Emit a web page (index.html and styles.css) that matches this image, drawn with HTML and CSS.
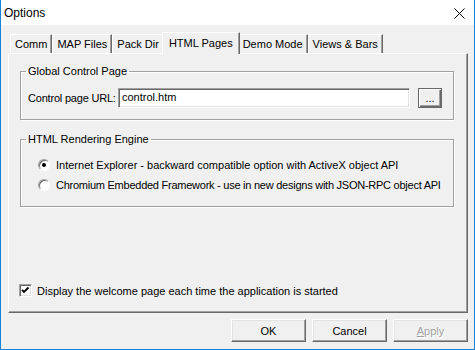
FILE: index.html
```html
<!DOCTYPE html>
<html lang="en">
<head>
    <meta charset="UTF-8">
    <title>Options</title>
    <link rel="stylesheet" href="styles.css">
</head>
<body>
    <div class="window">
        <div class="titlebar">
            <span class="title">Options</span>
            <svg class="close" width="11" height="11" viewBox="0 0 11 11">
                <path d="M0.5 0.5 L10.5 10.5 M10.5 0.5 L0.5 10.5" stroke="#000" stroke-width="1" fill="none"/>
            </svg>
        </div>
        <div class="client">
            <div class="tabs">
                <div class="tab">Comm</div>
                <div class="tab">MAP Files</div>
                <div class="tab">Pack Dir</div>
                <div class="tab active">HTML Pages</div>
                <div class="tab">Demo Mode</div>
                <div class="tab">Views &amp; Bars</div>
            </div>
            <div class="page">
                <fieldset class="group">
                    <legend>Global Control Page</legend>
                    <div class="url-row">
                        <label class="url-label">Control page URL:</label>
                        <div class="edit">control.htm</div>
                        <button class="btn browse">...</button>
                    </div>
                </fieldset>
                <fieldset class="group group-engine">
                    <legend>HTML Rendering Engine</legend>
                    <div class="options">
                        <div class="option"><span class="radio checked"></span>Internet Explorer - backward compatible option with ActiveX object API</div>
                        <div class="option narrow"><span class="radio"></span>Chromium Embedded Framework - use in new designs with JSON-RPC object API</div>
                    </div>
                </fieldset>
                <div class="check-row">
                    <span class="checkbox">
                        <svg width="11" height="11" viewBox="0 0 11 11">
                            <path d="M2 5 L4 7 L8.5 2.5" stroke="#000" stroke-width="1.8" fill="none"/>
                        </svg>
                    </span>
                    Display the welcome page each time the application is started
                </div>
            </div>
            <div class="buttons">
                <button class="btn">OK</button>
                <button class="btn">Cancel</button>
                <button class="btn disabled"><u>A</u>pply</button>
            </div>
        </div>
    </div>
</body>
</html>
```

FILE: styles.css
```css
body {
    margin: 0;
    font-family: "Liberation Sans", Arial, sans-serif;
    font-size: 11px;
    color: #000;
}
.window {
    width: 475px;
    height: 350px;
    box-sizing: border-box;
    border: 1px solid #1883d7;
    border-top: none;
    display: flex;
    flex-direction: column;
    background: #f0f0f0;
}
.titlebar {
    height: 25px;
    background: #fff;
    display: flex;
    align-items: center;
    justify-content: space-between;
    padding: 0 9px 0 3px;
    flex: none;
}
.title {
    font-size: 12px;
    margin-top: 1px;
}
.close {
    margin-top: 1px;
}
.client {
    flex: 1;
    padding: 7px 6px 0 7px;
}
.tabs {
    display: flex;
    align-items: flex-end;
    height: 21px;
    padding-left: 2px;
}
.tab {
    height: 19px;
    line-height: 19px;
    padding: 0 4px;
    border-top: 1px solid #fff;
    border-left: 1px solid #fff;
    border-right: 1px solid #696969;
    box-shadow: inset -1px 0 0 #a0a0a0;
    box-sizing: border-box;
    white-space: nowrap;
}
.tab.active {
    position: relative;
    z-index: 1;
    height: 22px;
    line-height: 20px;
    margin: 0 -2px -1px;
    padding: 0 6px;
    background: #f0f0f0;
}
.page {
    width: 460px;
    height: 260px;
    box-sizing: border-box;
    border-top: 1px solid #fff;
    border-left: 1px solid #fff;
    border-right: 1px solid #696969;
    border-bottom: 1px solid #696969;
    box-shadow: inset -1px -1px 0 #a0a0a0;
    padding: 11px 13px 0 11px;
}
.group {
    margin: 0;
    padding: 0;
    min-width: 0;
    border: 1px solid #a0a0a0;
    box-shadow: inset 1px 1px 0 #fff, 1px 1px 0 #fff;
}
.group legend {
    margin-left: 5px;
    padding: 0 2px;
    line-height: 13px;
}
.url-row {
    display: flex;
    align-items: center;
    padding: 10px 0 11px 7px;
}
.url-label {
    flex: none;
    width: 90px;
    white-space: nowrap;
    letter-spacing: -0.2px;
}
.edit {
    flex: none;
    width: 292px;
    height: 20px;
    box-sizing: border-box;
    background: #fff;
    border: 1px solid;
    border-color: #a0a0a0 #fff #fff #a0a0a0;
    box-shadow: inset 1px 1px 0 #696969, inset -1px -1px 0 #e3e3e3;
    padding: 2px 0 0 3px;
    margin-right: 8px;
}
.btn {
    font-family: inherit;
    font-size: 11px;
    color: #000;
    background: #f0f0f0;
    width: 75px;
    height: 23px;
    padding: 0;
    border: 1px solid;
    border-color: #fff #696969 #696969 #fff;
    box-shadow: inset -1px -1px 0 #a0a0a0, inset 1px 1px 0 #e3e3e3;
}
.btn.browse {
    flex: none;
    width: 24px;
    height: 20px;
    border-color: #696969;
    box-shadow: inset 1px 1px 0 #fff, inset -1px -1px 0 #696969, inset -2px -2px 0 #a0a0a0;
    line-height: 14px;
}
.btn.disabled {
    color: #a0a0a0;
    text-shadow: 1px 1px 0 #fff;
}
.group-engine {
    margin-top: 13px;
}
.options {
    padding: 9px 0 11px 17px;
}
.option {
    display: flex;
    align-items: center;
    height: 20px;
    white-space: nowrap;
}
.option.narrow {
    letter-spacing: -0.25px;
}
.radio {
    flex: none;
    width: 12px;
    height: 12px;
    box-sizing: border-box;
    border-radius: 50%;
    border: 1px solid;
    border-color: #a0a0a0 #fff #fff #a0a0a0;
    box-shadow: inset 1px 1px 0 #696969;
    background: #fff;
    margin-right: 6px;
    display: flex;
    align-items: center;
    justify-content: center;
}
.radio.checked::after {
    content: "";
    width: 4px;
    height: 4px;
    border-radius: 50%;
    background: #000;
}
.check-row {
    display: flex;
    align-items: center;
    margin: 77px 0 0 -1px;
    height: 13px;
    white-space: nowrap;
}
.checkbox {
    flex: none;
    width: 13px;
    height: 13px;
    box-sizing: border-box;
    border: 1px solid;
    border-color: #a0a0a0 #fff #fff #a0a0a0;
    box-shadow: inset 1px 1px 0 #696969, inset -1px -1px 0 #e3e3e3;
    background: #fff;
    margin-right: 5px;
    display: flex;
    align-items: center;
    justify-content: center;
}
.checkbox svg {
    display: block;
}
.buttons {
    display: flex;
    justify-content: flex-end;
    gap: 6px;
    margin-top: 6px;
}
```
